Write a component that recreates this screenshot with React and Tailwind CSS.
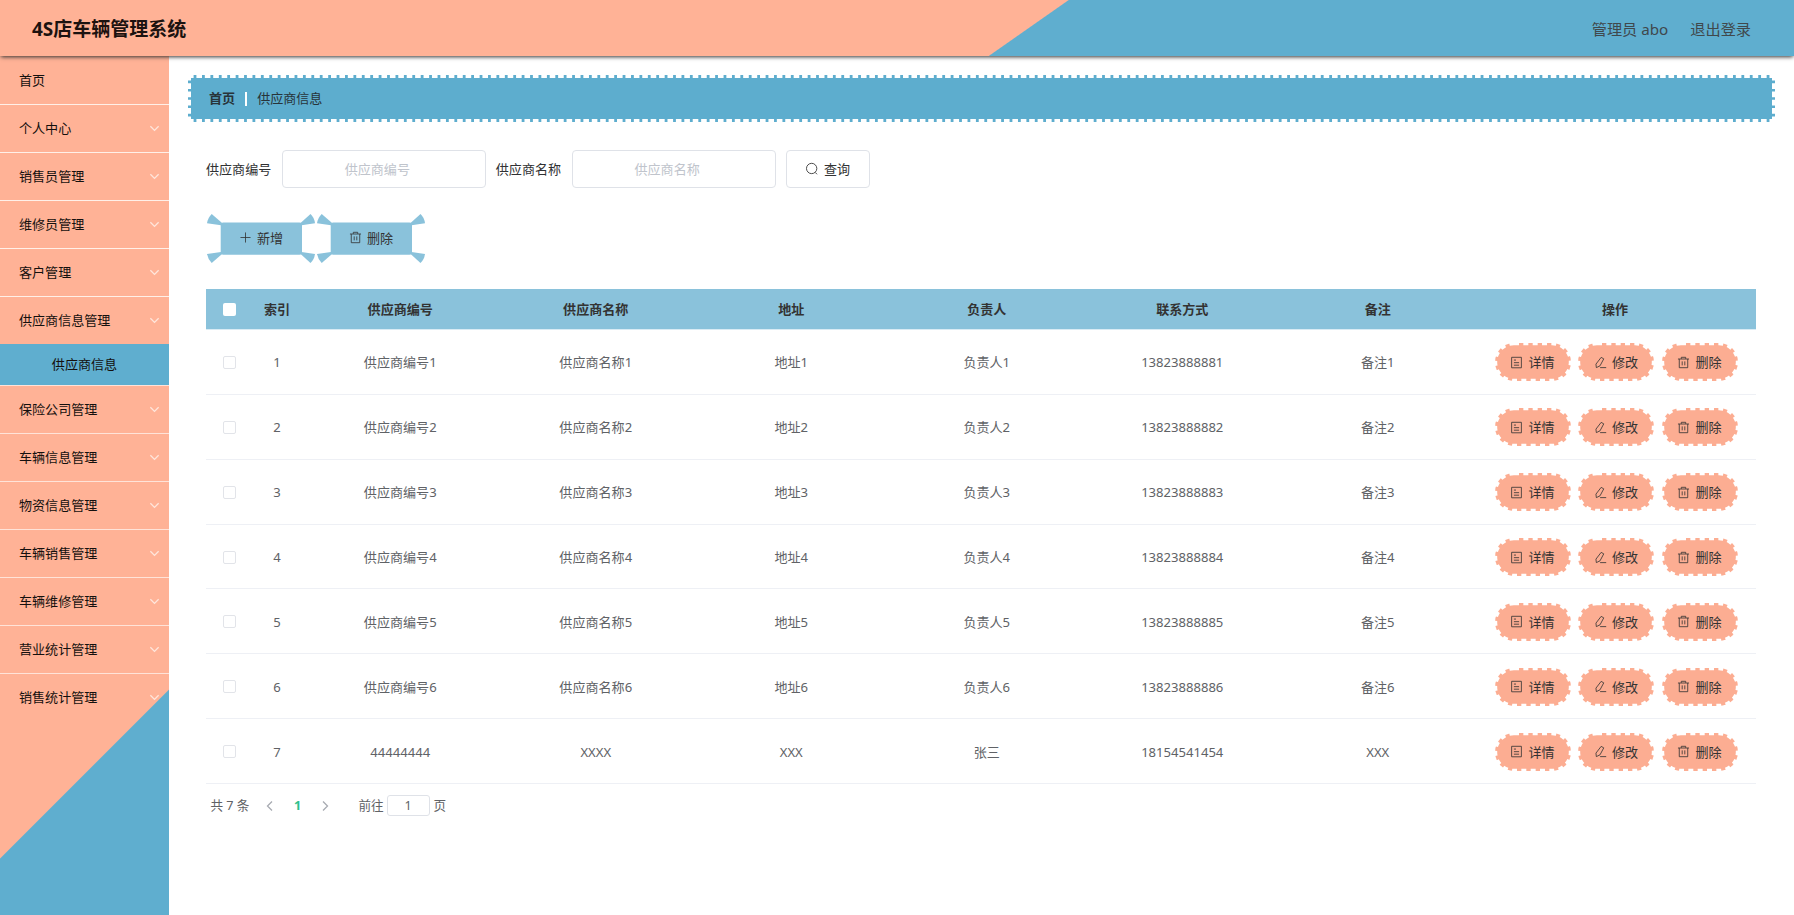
const MENU_TOP = ['首页', '个人中心', '销售员管理', '维修员管理', '客户管理', '供应商信息管理'];
const MENU_BOTTOM = ['保险公司管理', '车辆信息管理', '物资信息管理', '车辆销售管理', '车辆维修管理', '营业统计管理', '销售统计管理'];

const COLUMNS = ['供应商编号', '供应商名称', '地址', '负责人', '联系方式', '备注'];
const ROWS = [
  ...[1, 2, 3, 4, 5, 6].map((n) => [`供应商编号${n}`, `供应商名称${n}`, `地址${n}`, `负责人${n}`, `1382388888${n}`, `备注${n}`]),
  ['44444444', 'XXXX', 'XXX', '张三', '18154541454', 'XXX'],
];

const GRID = 'grid grid-cols-[47px_48px_repeat(6,195.5px)_1fr] items-center justify-items-center';

function Icon({ children, className = 'size-[13px]' }) {
  return (
    <svg viewBox="0 0 16 16" fill="none" stroke="currentColor" strokeWidth="1" className={`shrink-0 ${className}`}>
      {children}
    </svg>
  );
}

const PlusIcon = () => (
  <Icon>
    <path d="M8 1.8v12.4M1.8 8h12.4" />
  </Icon>
);

const TrashIcon = () => (
  <Icon>
    <path d="M1.2 3.7h13.6M5.3 3.5V1.6h5.4v1.9M2.8 3.8v10.6h10.4V3.8M6.4 6.6v4.9M9.6 6.6v4.9" />
  </Icon>
);

const TicketIcon = () => (
  <Icon>
    <path d="M2 1.6h12v12.9H2zM4.8 5h2.6M4.8 8.2h6.4M4.8 11.3h6.4" />
  </Icon>
);

const EditIcon = () => (
  <Icon>
    <path d="M8.8 1.7l3.2 1.8-4.6 8.6-4.5 2.2-.5-4.3zM7.5 14.3h7.5" />
  </Icon>
);

const SearchIcon = () => (
  <Icon className="size-[14px]">
    <circle cx="7.6" cy="7.4" r="5.9" />
    <path d="M11.7 11.9l2 2.1" />
  </Icon>
);

function Chevron({ className, d }) {
  return (
    <svg viewBox="0 0 12 12" fill="none" stroke="currentColor" className={className}>
      <path d={d} />
    </svg>
  );
}

function MenuItem({ label, arrow = true, className }) {
  return (
    <div className={`flex shrink-0 items-center justify-between pr-[9px] pl-[19px] ${className}`}>
      <span>{label}</span>
      {arrow && <Chevron className="mt-px size-[11px] text-[#ffe6dc] [stroke-width:1.4]" d="M1.5 3.5L6 8l4.5-4.5" />}
    </div>
  );
}

function RibbonButton({ icon, label }) {
  return (
    <button className="relative flex h-[49px] w-[108px] items-center justify-center">
      <svg viewBox="0 0 108 49" className="absolute inset-0 size-full" fill="#8ac2db">
        <rect x="13.7" y="8.5" width="81.3" height="32.2" rx="2.5" />
        <path d="M16 9.8L4.7 0Q1 3.5 0 9.3L14 11.3z" />
        <path d="M92.7 9.8L103.5 0Q107.3 3.5 108 9.3L94.500 11.3z" />
        <path d="M16 39.2L4.7 49Q1 45.5 0 39.9L14 37.9z" />
        <path d="M92.7 39.2L103.5 49Q107.3 45.5 108 39.9L94.5 37.9z" />
      </svg>
      <span className="relative flex items-center gap-[5px] pb-[2px] pl-px text-[#333]">
        {icon}
        {label}
      </span>
    </button>
  );
}

function PillButton({ icon, label }) {
  return (
    <button className="relative flex h-[38px] w-[76px] items-center justify-center gap-[5px] rounded-[19px] bg-[#fcad92] text-[#333]">
      <svg viewBox="0 0 76 38" fill="none" stroke="#fff" strokeWidth="3.4" className="absolute inset-0 size-full">
        <rect x="0.5" y="0.5" width="75" height="37" rx="18.5" strokeDasharray="5 4.34" />
      </svg>
      {icon}
      {label}
    </button>
  );
}

function Field({ label }) {
  return (
    <label className="flex items-center gap-[11px]">
      <span className="text-[#303133]">{label}</span>
      <input
        placeholder={label}
        className="h-[38px] w-[204px] rounded-[4px] border border-[#dfe2e8] pr-[28px] pl-[14px] text-center outline-none placeholder:text-[#c0c4cc]"
      />
    </label>
  );
}

export default function App() {
  return (
    <div className="flex h-[915px] w-[1794px] flex-col overflow-hidden bg-white font-['Noto_Sans','Noto_Sans_CJK_SC',sans-serif] text-[13.07px] leading-[20px] text-[#606266]">
      <header className="relative z-10 flex h-[56px] shrink-0 items-center justify-between bg-[linear-gradient(145deg,#ffb296_612.5px,#5faecf_613.5px)] pt-[2px] pr-[43px] pl-[32px] shadow-[0_2px_4px_-1px_#333]">
        <h1 className="text-[19px] font-bold text-[#1c1210]">4S店车辆管理系统</h1>
        <div className="flex gap-[22px] text-[15.2px] text-[#40484c]">
          <span>管理员 abo</span>
          <span>退出登录</span>
        </div>
      </header>

      <div className="flex flex-1">
        <aside className="flex w-[169px] shrink-0 flex-col bg-[linear-gradient(135deg,#ffb296_567px,#5faecf_568px)] text-[#14100e]">
          {MENU_TOP.map((label, i) => (
            <MenuItem
              key={label}
              label={label}
              arrow={i > 0}
              className={i === 0 ? 'h-[49px] border-b border-[#fff0e8]' : i === 5 ? 'h-[47px] pb-[2px]' : 'h-[48px] border-b border-[#fff0e8] pb-[2px]'}
            />
          ))}
          <div className="flex h-[42px] shrink-0 items-center justify-center border-b border-[#ffe3d8] bg-[#5faecf] pb-[2px]">供应商信息</div>
          {MENU_BOTTOM.map((label, i) => (
            <MenuItem
              key={label}
              label={label}
              className={i === 6 ? 'h-[48px] pb-[3px]' : 'h-[48px] border-b border-[#ffe3d8] pb-[2px]'}
            />
          ))}
        </aside>

        <main className="flex-1 pt-[19px] pl-[19px]">
          <div className="relative flex h-[47px] w-[1587px] items-center bg-[#5dadce] pb-[2px] pl-[21px] text-[#28343a]">
            <svg viewBox="0 0 1587 47" className="absolute inset-0 size-full" stroke="#fff" strokeWidth="3">
              <path d="M0 1.5H1587M0 45.5H1587" strokeDasharray="5.6 2.812" />
              <path d="M1.5 0V47M1585.5 0V47" strokeDasharray="5.6 2.68" />
            </svg>
            <span className="font-bold">首页</span>
            <span className="mt-[3px] mr-[10px] ml-[10px] h-[14px] w-[2px] bg-white" />
            <span>供应商信息</span>
          </div>

          <div className="mt-[28px] ml-[18px] flex items-center gap-[9.5px]">
            <Field label="供应商编号" />
            <Field label="供应商名称" />
            <button className="flex h-[38px] w-[84px] items-center justify-center gap-[5px] rounded-[4px] border border-[#dfe2e8] pb-px text-[#333]">
              <SearchIcon />
              查询
            </button>
          </div>

          <div className="mt-[26px] ml-[18.5px] flex gap-[2px]">
            <RibbonButton icon={<PlusIcon />} label="新增" />
            <RibbonButton icon={<TrashIcon />} label="删除" />
          </div>

          <div className="mt-[26px] ml-[18px] w-[1550px]">
            <div className={`${GRID} h-[41px] border-b border-[#d9ebf4] bg-[#8ac2db] font-bold text-[#333]`}>
              <span className="size-[13px] rounded-[2px] bg-white" />
              <span>索引</span>
              {COLUMNS.map((c) => (
                <span key={c} className="pl-[3px]">{c}</span>
              ))}
              <span>操作</span>
            </div>
            {ROWS.map((row, i) => (
              <div key={i} className={`${GRID} h-[64.87px] border-b border-[#eef0f5] pt-px`}>
                <span className="size-[13px] rounded-[2px] border border-[#e2e4e9] bg-white" />
                <span>{i + 1}</span>
                {row.map((cell, j) => (
                  <span key={j} className="pl-[3px]">{cell}</span>
                ))}
                <div className="flex gap-[7.5px] pl-[2px]">
                  <PillButton icon={<TicketIcon />} label="详情" />
                  <PillButton icon={<EditIcon />} label="修改" />
                  <PillButton icon={<TrashIcon />} label="删除" />
                </div>
              </div>
            ))}
          </div>

          <div className="mt-[11px] ml-[22.5px] flex h-[21px] items-center text-[12.6px]">
            <span className="w-[53.5px]">共 7 条</span>
            <Chevron className="size-[12px] text-[#a8abb2] [stroke-width:1.3]" d="M8 1.5L3.5 6L8 10.5" />
            <span className="w-[43px] text-center font-bold text-[#2fbf8c]">1</span>
            <Chevron className="size-[12px] text-[#a8abb2] [stroke-width:1.3]" d="M4 1.5L8.5 6L4 10.5" />
            <span className="ml-[27.5px] w-[28px]">前往</span>
            <span className="flex h-[21px] w-[43px] items-center justify-center rounded-[3px] border border-[#dfe2e8]">1</span>
            <span className="ml-[4px]">页</span>
          </div>
        </main>
      </div>
    </div>
  );
}
